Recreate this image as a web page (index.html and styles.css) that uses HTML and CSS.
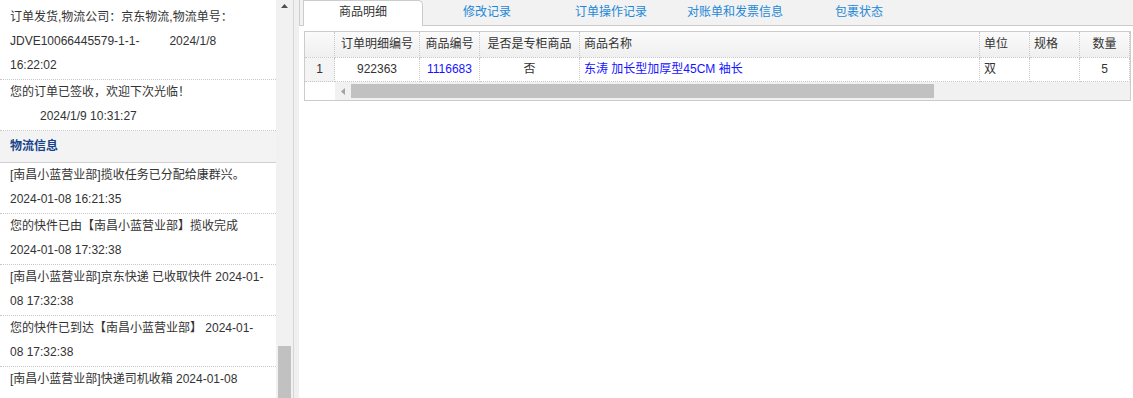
FILE: index.html
```html
<!DOCTYPE html>
<html lang="zh-CN">
<head>
<meta charset="utf-8">
<title>订单详情</title>
<link rel="stylesheet" href="styles.css">
</head>
<body>
<div class="layout">
  <aside class="west">
    <div class="west-body">
      <ul class="log">
        <li class="log-item">订单发货,物流公司：京东物流,物流单号：JDVE10066445579-1-1-&nbsp;&nbsp;&nbsp;&nbsp;&nbsp;&nbsp;&nbsp;&nbsp; 2024/1/8 16:22:02</li>
        <li class="log-item">您的订单已签收，欢迎下次光临！<span class="indent">2024/1/9 10:31:27</span></li>
      </ul>
      <h3 class="section-title">物流信息</h3>
      <ul class="log">
        <li class="log-item">[南昌小蓝营业部]揽收任务已分配给康群兴。 2024-01-08 16:21:35</li>
        <li class="log-item">您的快件已由【南昌小蓝营业部】揽收完成 2024-01-08 17:32:38</li>
        <li class="log-item">[南昌小蓝营业部]京东快递 已收取快件 2024-01-08 17:32:38</li>
        <li class="log-item">您的快件已到达【南昌小蓝营业部】 2024-01-08 17:32:38</li>
        <li class="log-item log-tail">[南昌小蓝营业部]快递司机收箱 2024-01-08</li>
      </ul>
    </div>
    <div class="vscroll">
      <svg class="arrow-up" width="7" height="4" viewBox="0 0 7 4"><polygon points="0,4 7,4 3.5,0" fill="#505050"/></svg>
      <span class="vthumb"></span>
    </div>
  </aside>
  <div class="splitter"></div>
  <main class="center">
    <div class="tabs">
      <span class="tab active">商品明细</span>
      <span class="tab">修改记录</span>
      <span class="tab">订单操作记录</span>
      <span class="tab">对账单和发票信息</span>
      <span class="tab">包裹状态</span>
    </div>
    <div class="panel">
      <div class="grid">
        <div class="grid-row grid-head">
          <div class="cell rownum"></div>
          <div class="cell c">订单明细编号</div>
          <div class="cell c">商品编号</div>
          <div class="cell c">是否是专柜商品</div>
          <div class="cell">商品名称</div>
          <div class="cell">单位</div>
          <div class="cell">规格</div>
          <div class="cell c">数量</div>
        </div>
        <div class="grid-row grid-body">
          <div class="cell rownum c">1</div>
          <div class="cell c">922363</div>
          <div class="cell c link">1116683</div>
          <div class="cell c">否</div>
          <div class="cell link">东涛 加长型加厚型45CM 袖长</div>
          <div class="cell">双</div>
          <div class="cell"></div>
          <div class="cell c">5</div>
        </div>
        <div class="hscroll">
          <div class="hscroll-gap"></div>
          <div class="hscroll-track">
            <svg class="arrow-left" width="4" height="7" viewBox="0 0 4 7"><polygon points="4,0 4,7 0,3.5" fill="#a3a3a3"/></svg>
            <span class="hthumb"></span>
          </div>
        </div>
      </div>
    </div>
  </main>
</div>
</body>
</html>
```

FILE: styles.css
```css
* { box-sizing: border-box; }
html, body { margin: 0; padding: 0; }
body {
  font: 12px/1.5 "Liberation Sans", Arial, "Noto Sans CJK SC", sans-serif;
  color: #333;
  background: #fff;
  overflow: hidden;
}
.layout { display: flex; height: 398px; overflow: hidden; }

/* left column */
.west { display: flex; width: 293px; flex: none; }
.west-body { width: 276px; padding-top: 5px; overflow: hidden; }
.log { list-style: none; margin: 0; padding: 0; }
.log-item {
  padding: 0 11px 2px 10px;
  line-height: 24px;
  border-bottom: 1px dotted #c8c8c8;
}
.log-tail { padding-bottom: 30px; }
.indent { display: block; padding-left: 30px; }
.section-title {
  margin: 0;
  height: 32px;
  line-height: 31px;
  padding-left: 10px;
  background: #f3f3f3;
  border-bottom: 1px solid #d0d0d0;
  font-size: 12px;
  font-weight: bold;
  color: #15428b;
}
.vscroll { position: relative; width: 17px; background: #f1f1f1; }
.arrow-up { position: absolute; left: 5px; top: 4px; display: block; }
.vthumb {
  position: absolute; left: 2px; top: 346px;
  width: 13px; height: 80px; background: #c1c1c1;
}
.splitter { width: 6px; flex: none; background: #f0f0f0; border-left: 1px solid #d6d6d6; }

/* right column */
.center { flex: 1; min-width: 0; display: flex; flex-direction: column; }
.tabs {
  height: 26px;
  flex: none;
  display: flex;
  align-items: flex-start;
  gap: 4px;
  padding-left: 3px;
  background: #f2f2f2;
  border-left: 1px solid #ccc;
  border-bottom: 1px solid #ccc;
}
.tab {
  width: 120px;
  height: 25px;
  line-height: 24px;
  text-align: center;
  color: #1e88d6;
}
.tab.active {
  height: 26px;
  line-height: 22px;
  background: #fff;
  border: 1px solid #ccc;
  border-bottom: 0;
  border-radius: 0 5px 0 0;
  color: #333;
}
.panel { flex: 1; padding: 5px 0 0 5px; background: #fff; }
.grid { width: 827px; border: 1px solid #ccc; }
.grid-row {
  display: grid;
  grid-template-columns: 30px 85px 60px 100px 400px 50px 50px 50px;
}
.cell {
  padding: 0 4px;
  white-space: nowrap;
  overflow: hidden;
  border-right: 1px dotted #c8c8c8;
  border-bottom: 1px dotted #c8c8c8;
}
.c { text-align: center; }
.grid-head .cell {
  height: 26px;
  line-height: 24px;
  background: linear-gradient(#fbfbfb, #efefef);
}
.grid-body .cell { height: 24px; line-height: 23px; }
.grid-body .rownum { background: #f4f4f4; }
.link { color: #1414ff; }
.hscroll { display: flex; height: 18px; }
.hscroll-gap { width: 30px; flex: none; }
.hscroll-track { position: relative; flex: 1; background: #f1f1f1; }
.arrow-left { position: absolute; left: 6px; top: 6px; display: block; }
.hthumb {
  position: absolute; left: 16px; top: 2px;
  width: 583px; height: 14px; background: #c1c1c1;
}
```
